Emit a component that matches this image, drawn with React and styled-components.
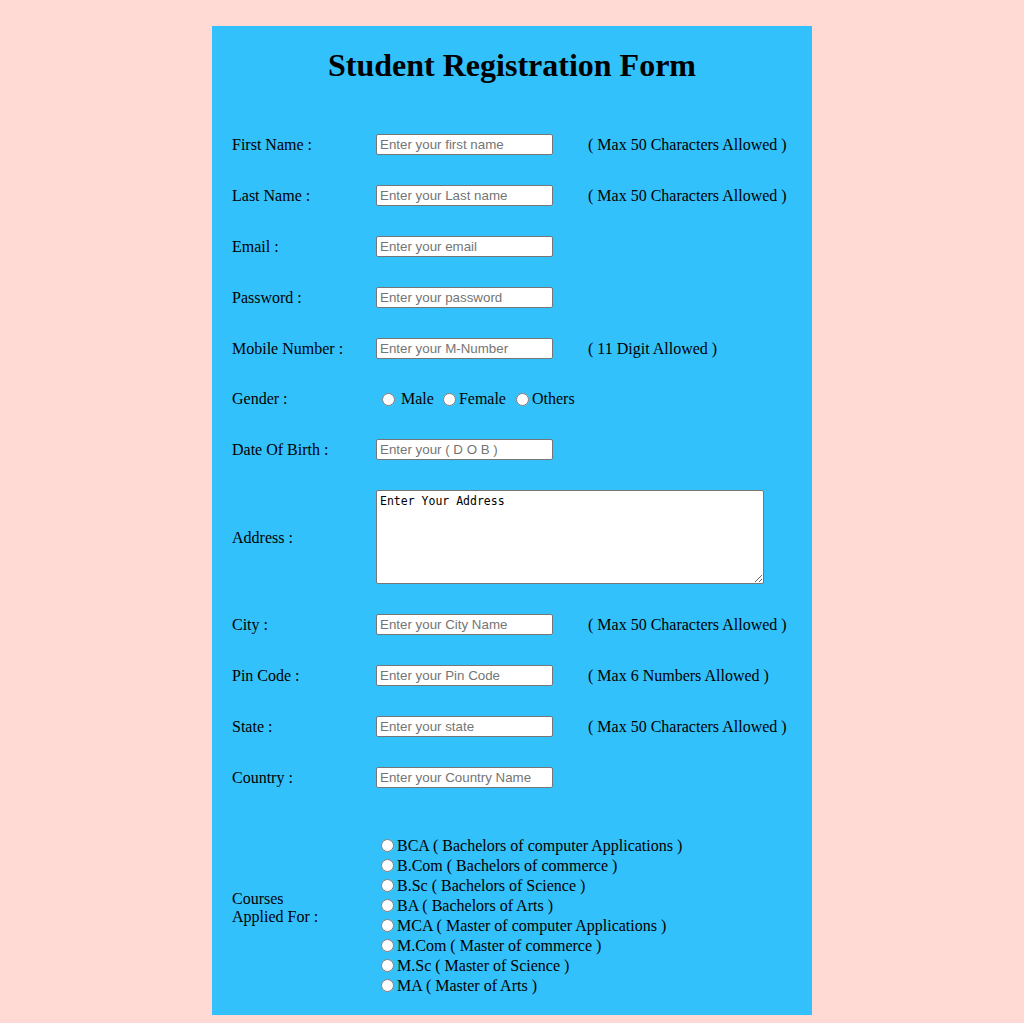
import React from "react";
import styled, {createGlobalStyle} from "styled-components";

const GlobalStyle = createGlobalStyle`
    html, body {
        margin: 0;
        padding: 0;
        background: #ffdad4;
    }
    body {
        font-family: "Liberation Serif", "Times New Roman", serif;
        font-size: 16px;
        color: #000;
    }
`

const FIELDS_TOP = [
    {label: "First Name :", placeholder: "Enter your first name", note: "( Max 50 Characters Allowed )"},
    {label: "Last Name :", placeholder: "Enter your Last name", note: "( Max 50 Characters Allowed )"},
    {label: "Email :", placeholder: "Enter your email"},
    {label: "Password :", placeholder: "Enter your password", type: "password"},
    {label: "Mobile Number :", placeholder: "Enter your M-Number", note: "( 11 Digit Allowed )"},
];

const FIELDS_BOTTOM = [
    {label: "City :", placeholder: "Enter your City Name", note: "( Max 50 Characters Allowed )"},
    {label: "Pin Code :", placeholder: "Enter your Pin Code", note: "( Max 6 Numbers Allowed )"},
    {label: "State :", placeholder: "Enter your state", note: "( Max 50 Characters Allowed )"},
    {label: "Country :", placeholder: "Enter your Country Name"},
];

const COURSES = [
    "BCA ( Bachelors of computer Applications )",
    "B.Com ( Bachelors of commerce )",
    "B.Sc ( Bachelors of Science )",
    "BA ( Bachelors of Arts )",
    "MCA ( Master of computer Applications )",
    "M.Com ( Master of commerce )",
    "M.Sc ( Master of Science )",
    "MA ( Master of Arts )",
];

const TextRow = ({label, placeholder, note, type = "text"}) => (
    <>
        <Label>{label}</Label>
        <TextInput type={type} placeholder={placeholder}/>
        <Note>{note}</Note>
    </>
)

const App = () => {
    return (
        <>
            <GlobalStyle/>
            <Card>
                <Title>Student Registration Form</Title>
                <FormGrid>
                    {FIELDS_TOP.map(f => <TextRow key={f.label} {...f}/>)}

                    <Label lh={20}>Gender :</Label>
                    <RadioGroup>
                        <Radio type="radio" name="gender"/>
                        <RadioText first after={4}>Male</RadioText>
                        <Radio type="radio" name="gender"/>
                        <RadioText after={5}>Female</RadioText>
                        <Radio type="radio" name="gender"/>
                        <RadioText>Others</RadioText>
                    </RadioGroup>

                    <TextRow label="Date Of Birth :" placeholder="Enter your ( D O B )"/>

                    <Label>Address :</Label>
                    <AddressBox defaultValue="Enter Your Address"/>

                    {FIELDS_BOTTOM.map(f => <TextRow key={f.label} {...f}/>)}

                    <CourseLabel>Courses<br/>Applied For :</CourseLabel>
                    <CourseList>
                        {COURSES.map(c => (
                            <CourseItem key={c}>
                                <Radio type="radio" name="course"/>
                                <span>{c}</span>
                            </CourseItem>
                        ))}
                    </CourseList>
                </FormGrid>
            </Card>
        </>
    )
}

const Card = styled.div`
    width: 600px;
    min-height: 989px;
    margin: 26px auto 0;
    background: #33c1fc;
    box-sizing: border-box;
    padding: 0 20px 19px;
`

const Title = styled.h1`
    margin: 0;
    padding-top: 21px;
    height: 86px;
    box-sizing: border-box;
    text-align: center;
    font-size: 32px;
    font-weight: bold;
    line-height: 37px;
`

const FormGrid = styled.div`
    margin-top: 22px;
    display: grid;
    grid-template-columns: 144px 177px auto;
    row-gap: 30px;
    align-items: center;
`

const Label = styled.div`
    line-height: ${({lh = 21}) => lh}px;
`

const Note = styled.div`
    padding-left: 35px;
    line-height: 21px;
    white-space: nowrap;
`

const TextInput = styled.input`
    width: 177px;
    height: 21px;
    box-sizing: border-box;
    margin: 0;
    padding: 1px 3px;
    border: 1px solid #767676;
    border-radius: 2px;
    background: #fff;
    font-family: "Liberation Sans", Arial, sans-serif;
    font-size: 13.33px;
    color: #000;

    &::placeholder {
        color: #757575;
    }
`

const RadioGroup = styled.div`
    grid-column: 2 / 4;
    display: flex;
    align-items: center;
    height: 20px;
    padding-left: 1px;
`

const Radio = styled.input`
    width: 13px;
    height: 13px;
    margin: 0 3px 0 5px;
    flex: none;
`

const RadioText = styled.span`
    margin-left: ${({first}) => first ? "3px" : "0"};
    margin-right: ${({after = 0}) => after}px;
    white-space: nowrap;
`

const AddressBox = styled.textarea`
    grid-column: 2 / 4;
    width: 388px;
    height: 94px;
    box-sizing: border-box;
    margin: 0;
    padding: 2px 3px;
    border: 1px solid #767676;
    border-radius: 2px;
    resize: both;
    font-family: "DejaVu Sans Mono", "Liberation Mono", monospace;
    font-size: 11.5px;
    line-height: 16px;
    color: #000;
`

const CourseLabel = styled.div`
    line-height: 18px;
    padding-top: 2px;
`

const CourseList = styled.div`
    grid-column: 2 / 4;
    margin-top: 18px;
    display: flex;
    flex-direction: column;
`

const CourseItem = styled.label`
    display: flex;
    align-items: center;
    height: 20px;
    white-space: nowrap;

    ${Radio} {
        margin: 0 3px 0 5px;
        position: relative;
        top: -1px;
    }
`

export default App;
